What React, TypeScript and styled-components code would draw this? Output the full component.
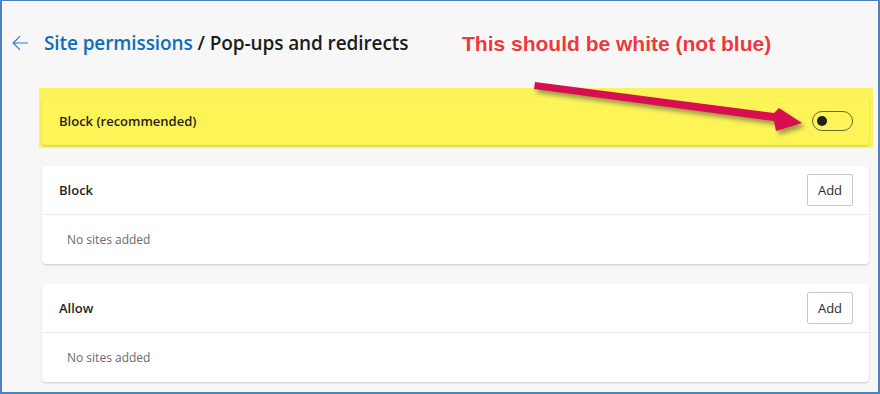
import React from "react";
import styled, { createGlobalStyle } from "styled-components";

const Global = createGlobalStyle`
  html, body { margin: 0; padding: 0; background: #f7f7f7; }
  * { box-sizing: border-box; }
`;

const Frame = styled.div`
  position: relative;
  width: 880px;
  height: 394px;
  overflow: hidden;
  background: #f7f7f7;
  border: 2px solid #4f81bd;
  border-top-width: 1px;
  font-family: "Open Sans", "Noto Sans", sans-serif;
  color: #1b1b1b;
`;

const Header = styled.div`
  display: flex;
  align-items: center;
  height: 87px;
  padding: 0 0 0 10px;
`;

const BackButton = styled.span`
  display: flex;
  width: 17px;
  height: 16px;
  margin-right: 15px;
  margin-top: -3px;
`;

const Title = styled.h1`
  margin: 0;
  margin-top: -3px;
  font-size: 19px;
  font-weight: 600;
  letter-spacing: -0.1px;
  color: #1b1b1b;
  white-space: nowrap;
`;

const Crumb = styled.span`
  color: #0f6cbd;
`;

const Content = styled.div`
  display: flex;
  flex-direction: column;
  padding: 0 9px 0 40px;
`;

const Highlight = styled.div`
  background: #fbf35a;
  padding: 9px 4px 3px 3px;
  margin: 0 -4px 18px -3px;
`;

const Card = styled.div<{ $tint?: boolean }>`
  background: ${(p) => (p.$tint ? "#fdf458" : "#ffffff")};
  border-radius: 4px;
  box-shadow: 0 1px 2px rgba(0, 0, 0, 0.18);
  margin-bottom: ${(p) => (p.$tint ? "0" : "20px")};
`;

const Row = styled.div<{ $h: number; $divider?: boolean }>`
  display: flex;
  align-items: center;
  justify-content: space-between;
  height: ${(p) => p.$h}px;
  padding: 0 16px 0 17px;
  border-bottom: ${(p) => (p.$divider ? "1px solid #ececec" : "none")};
`;

const Label = styled.span`
  font-size: 13px;
  font-weight: 600;
  color: #1f1f1f;
`;

const Empty = styled.span`
  font-size: 12px;
  color: #6a6a6a;
  padding-left: 8px;
`;

const AddButton = styled.button`
  width: 46px;
  height: 32px;
  border: 1px solid #c8c8c8;
  border-radius: 2px;
  background: #ffffff;
  font-family: "Open Sans", "Noto Sans", sans-serif;
  font-size: 13px;
  color: #2b2b2b;
  padding: 0;
`;

const Toggle = styled.span`
  display: flex;
  align-items: center;
  width: 41px;
  height: 20px;
  border: 1px solid #6b6531;
  border-radius: 10px;
  padding-left: 4px;
`;

const Knob = styled.span`
  width: 10px;
  height: 10px;
  border-radius: 50%;
  background: #1f1f1f;
`;

const Annotation = styled.div`
  position: absolute;
  left: 460px;
  top: 30px;
  font-family: "Liberation Sans", Arial, sans-serif;
  font-weight: 700;
  font-size: 21px;
  line-height: 26px;
  color: #f0383c;
  white-space: nowrap;
  text-shadow: 0 0 2px #fff, 0 0 3px #fff, 0 0 4px #fff;
`;

const ArrowLayer = styled.svg`
  position: absolute;
  left: 0;
  top: 0;
  pointer-events: none;
`;

const SiteCard = ({ title }: { title: string }) => (
  <Card>
    <Row $h={49} $divider>
      <Label>{title}</Label>
      <AddButton>Add</AddButton>
    </Row>
    <Row $h={49}>
      <Empty>No sites added</Empty>
    </Row>
  </Card>
);

const ARROW = "M533 81 L772 112 L777 107 L800 122 L774 130 L772 120 L532 88 Z";

export default function App() {
  return (
    <>
      <Global />
      <Frame>
        <Header>
          <BackButton>
            <svg width="17" height="16" viewBox="0 0 17 16" fill="none">
              <path d="M16 8H1.5M8 1.2L1.2 8l6.8 6.8" stroke="#2b7bd6" strokeWidth="1.2" />
            </svg>
          </BackButton>
          <Title>
            <Crumb>Site permissions</Crumb> / Pop-ups and redirects
          </Title>
        </Header>
        <Content>
          <Highlight>
            <Card $tint>
              <Row $h={48}>
                <Label>Block (recommended)</Label>
                <Toggle>
                  <Knob />
                </Toggle>
              </Row>
            </Card>
          </Highlight>
          <SiteCard title="Block" />
          <SiteCard title="Allow" />
        </Content>
        <Annotation>This should be white (not blue)</Annotation>
        <ArrowLayer width="880" height="394" viewBox="0 0 880 394">
          <defs>
            <filter id="sh" x="-10%" y="-50%" width="120%" height="200%">
              <feGaussianBlur stdDeviation="2" />
            </filter>
          </defs>
          <g transform="translate(3,4)" opacity="0.45" filter="url(#sh)">
            <path d={ARROW} fill="#333" />
          </g>
          <path d={ARROW} fill="#d80e50" />
        </ArrowLayer>
      </Frame>
    </>
  );
}
